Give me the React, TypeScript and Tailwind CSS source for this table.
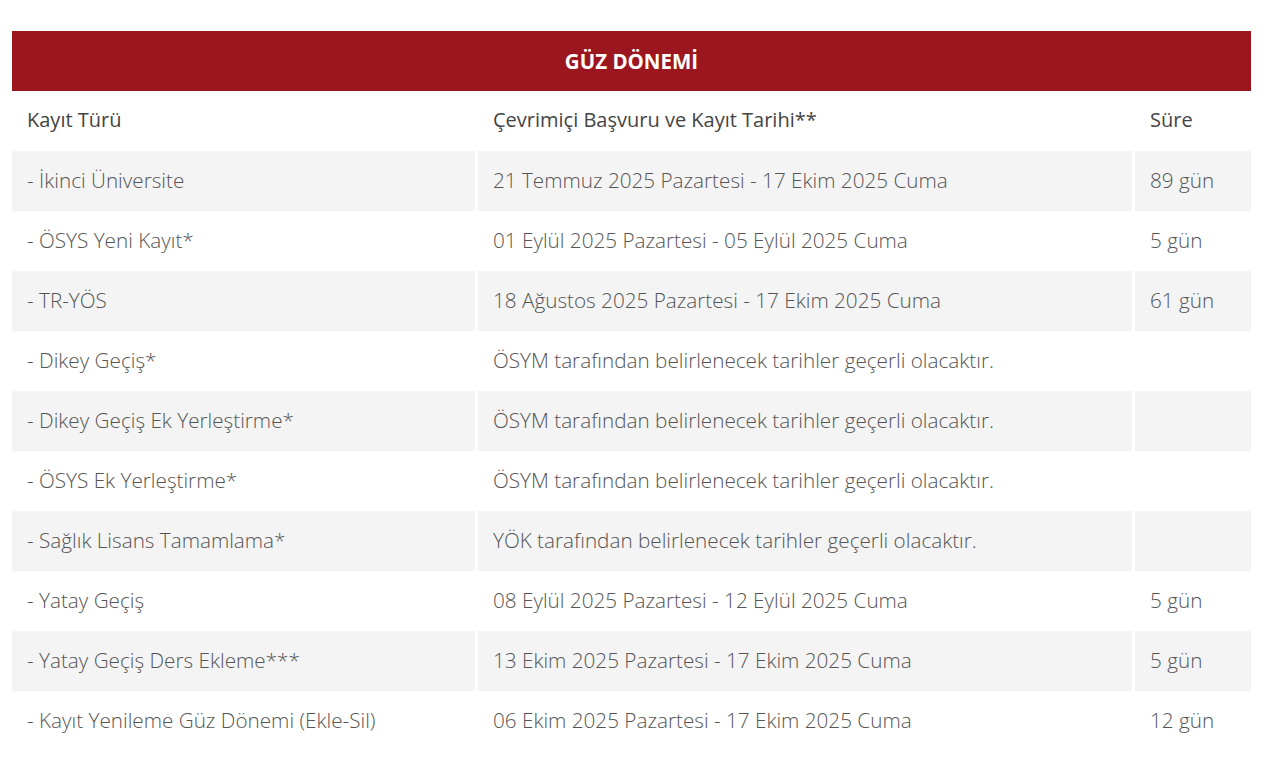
const rows: [string, string, string][] = [
  ["- İkinci Üniversite", "21 Temmuz 2025 Pazartesi - 17 Ekim 2025 Cuma", "89 gün"],
  ["- ÖSYS Yeni Kayıt*", "01 Eylül 2025 Pazartesi - 05 Eylül 2025 Cuma", "5 gün"],
  ["- TR-YÖS", "18 Ağustos 2025 Pazartesi - 17 Ekim 2025 Cuma", "61 gün"],
  ["- Dikey Geçiş*", "ÖSYM tarafından belirlenecek tarihler geçerli olacaktır.", ""],
  ["- Dikey Geçiş Ek Yerleştirme*", "ÖSYM tarafından belirlenecek tarihler geçerli olacaktır.", ""],
  ["- ÖSYS Ek Yerleştirme*", "ÖSYM tarafından belirlenecek tarihler geçerli olacaktır.", ""],
  ["- Sağlık Lisans Tamamlama*", "YÖK tarafından belirlenecek tarihler geçerli olacaktır.", ""],
  ["- Yatay Geçiş", "08 Eylül 2025 Pazartesi - 12 Eylül 2025 Cuma", "5 gün"],
  ["- Yatay Geçiş Ders Ekleme***", "13 Ekim 2025 Pazartesi - 17 Ekim 2025 Cuma", "5 gün"],
  ["- Kayıt Yenileme Güz Dönemi (Ekle-Sil)", "06 Ekim 2025 Pazartesi - 17 Ekim 2025 Cuma", "12 gün"],
];

export default function App() {
  return (
    <div className="min-h-screen bg-white pt-[31px] pl-[12px] pr-[21px] font-['Open_Sans',sans-serif]">
      <div className="flex h-[60px] items-center justify-center bg-[#9c1620] text-[20.5px] font-bold text-white">
        GÜZ DÖNEMİ
      </div>
      <div className="grid grid-cols-[463px_654px_116px] gap-x-[3px]">
        <div className="flex h-[60px] items-center px-[15px] pb-[2px] text-[20px] text-[#444]">Kayıt Türü</div>
        <div className="flex h-[60px] items-center px-[15px] pb-[2px] text-[20px] text-[#444]">Çevrimiçi Başvuru ve Kayıt Tarihi**</div>
        <div className="flex h-[60px] items-center px-[15px] pb-[2px] text-[20px] text-[#444]">Süre</div>
        {rows.map((r, i) => {
          const bg = i % 2 === 0 ? "bg-[#f4f4f4]" : "bg-white";
          return r.map((c, j) => (
            <div
              key={`${i}-${j}`}
              className={`flex h-[60px] items-center px-[15px] pb-[1px] whitespace-nowrap text-[20.7px] font-light text-[#555] ${bg}`}
            >
              {c}
            </div>
          ));
        })}
      </div>
    </div>
  );
}
